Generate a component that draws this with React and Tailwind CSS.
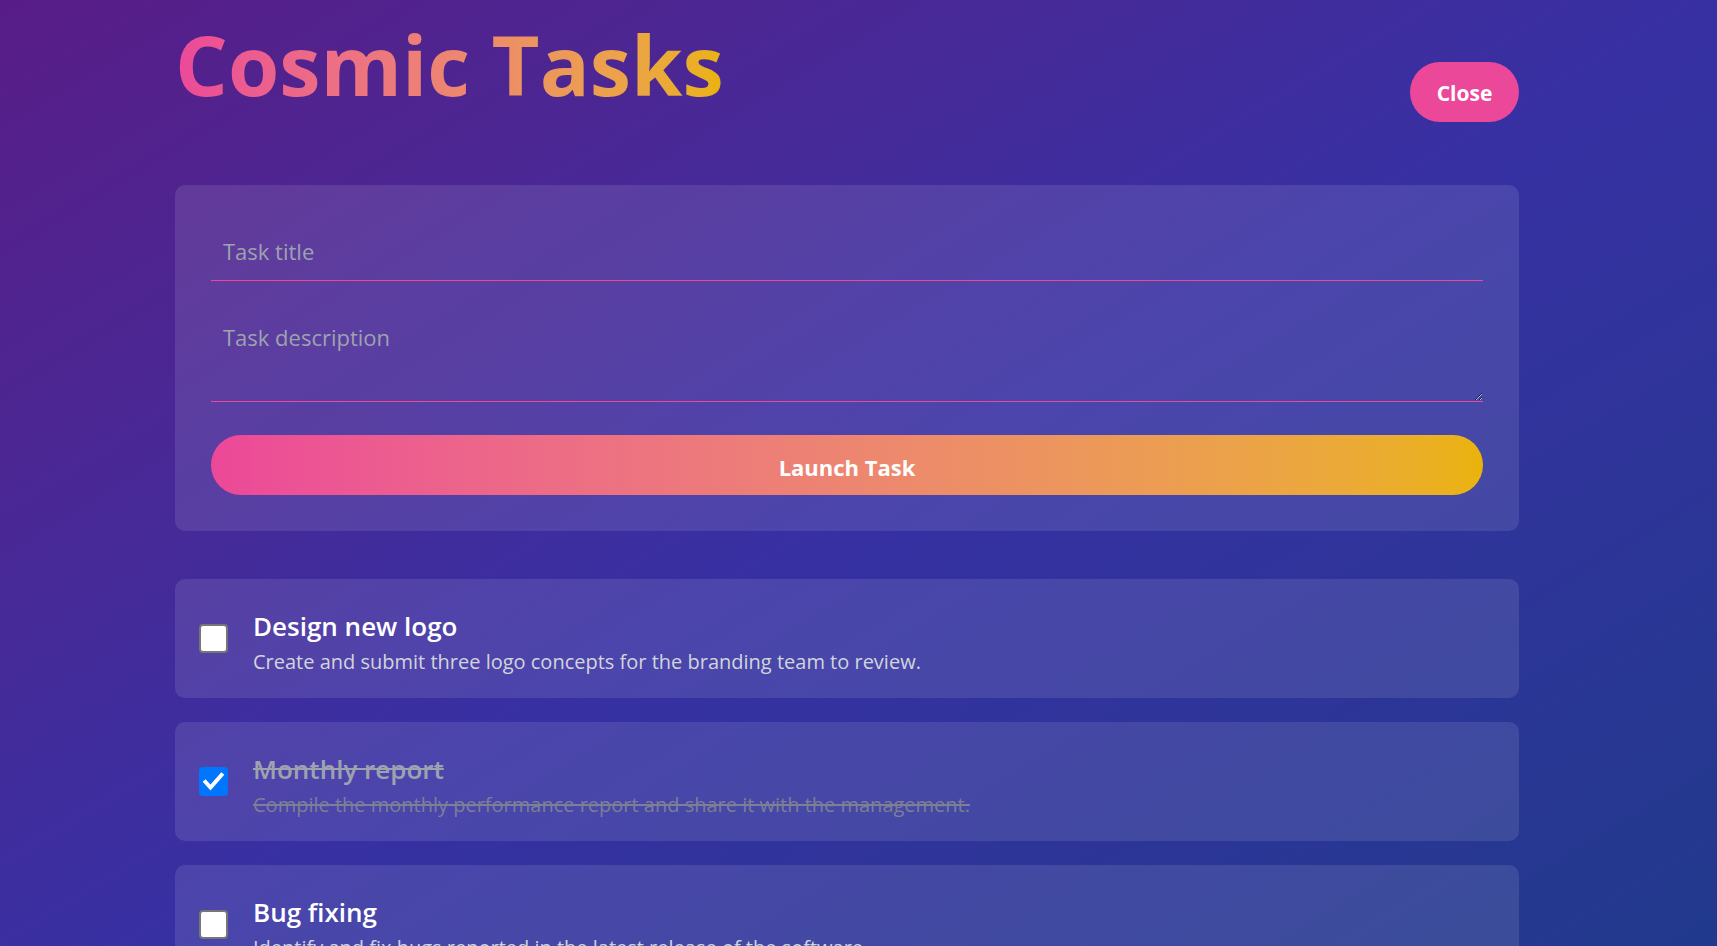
import { useState } from 'react';

const initialTasks = [
  {
    id: 1,
    title: 'Design new logo',
    description: 'Create and submit three logo concepts for the branding team to review.',
    done: false,
  },
  {
    id: 2,
    title: 'Monthly report',
    description: 'Compile the monthly performance report and share it with the management.',
    done: true,
  },
  {
    id: 3,
    title: 'Bug fixing',
    description: 'Identify and fix bugs reported in the latest release of the software.',
    done: false,
  },
];

function Checkbox({ checked, onChange }) {
  return (
    <span className="relative w-[29px] h-[29px] shrink-0">
      <input
        type="checkbox"
        checked={checked}
        onChange={onChange}
        className="block appearance-none w-[29px] h-[29px] m-0 rounded-[4px] border-2 border-[#767676] bg-white checked:bg-[#0075ff] checked:border-[#0075ff] cursor-pointer"
      />
      {checked && (
        <svg
          viewBox="0 0 29 29"
          className="absolute inset-0 w-[29px] h-[29px] pointer-events-none"
        >
          <polyline
            points="6.5,15 11.5,20.5 22.5,8"
            fill="none"
            stroke="white"
            strokeWidth="4"
            strokeLinecap="square"
          />
        </svg>
      )}
    </span>
  );
}

export default function App() {
  const [tasks, setTasks] = useState(initialTasks);
  const [title, setTitle] = useState('');
  const [description, setDescription] = useState('');

  const toggleTask = (id) => {
    setTasks(tasks.map((t) => (t.id === id ? { ...t, done: !t.done } : t)));
  };

  const addTask = () => {
    if (!title.trim()) return;
    setTasks([...tasks, { id: Date.now(), title, description, done: false }]);
    setTitle('');
    setDescription('');
  };

  return (
    <div className="min-h-screen bg-gradient-to-br from-[#581c87] via-[#3730a3] to-[#1e3a8a] font-['Open_Sans',sans-serif]">
      <div className="w-[1344px] ml-[175px] pb-12">
        <header className="flex justify-between items-start">
          <h1 className="mt-[22px] text-[83px] font-bold leading-none bg-gradient-to-r from-[#ec4899] to-[#eab308] bg-clip-text text-transparent">
            Cosmic Tasks
          </h1>
          <button className="mt-[62px] h-[60px] w-[109px] pt-[3px] rounded-full bg-[#ec4899] text-white font-bold text-[21px]">
            Close
          </button>
        </header>

        <div className="mt-[63px] p-9 rounded-[10px] bg-white/10">
          <input
            type="text"
            value={title}
            onChange={(e) => setTitle(e.target.value)}
            placeholder="Task title"
            className="block w-full h-[60px] px-3 bg-transparent border-b border-[#ec4899] text-[22px] text-white placeholder:text-[#9ca3af] outline-none"
          />
          <textarea
            value={description}
            onChange={(e) => setDescription(e.target.value)}
            placeholder="Task description"
            className="block w-full h-[93px] mt-[28px] px-3 py-3 bg-transparent border-b border-[#ec4899] text-[22px] text-white placeholder:text-[#9ca3af] outline-none"
          />
          <button
            onClick={addTask}
            className="block w-full h-[60px] mt-[33px] pt-1 rounded-full bg-gradient-to-r from-[#ec4899] to-[#eab308] text-white font-bold text-[22px]"
          >
            Launch Task
          </button>
        </div>

        <div className="mt-12 flex flex-col gap-6">
          {tasks.map((task) => (
            <div key={task.id} className="h-[119px] px-6 flex items-center gap-[25px] rounded-[10px] bg-white/10">
              <Checkbox checked={task.done} onChange={() => toggleTask(task.id)} />
              <div className="pt-[6px]">
                <h3
                  className={`text-[26px] leading-[34px] font-semibold ${
                    task.done ? 'text-[#9ca3af] line-through' : 'text-white'
                  }`}
                >
                  {task.title}
                </h3>
                <p
                  className={`mt-[5px] text-[20px] leading-[27px] ${
                    task.done ? 'text-[#7c7f96] line-through' : 'text-[#d1d5db]'
                  }`}
                >
                  {task.description}
                </p>
              </div>
            </div>
          ))}
        </div>
      </div>
    </div>
  );
}
